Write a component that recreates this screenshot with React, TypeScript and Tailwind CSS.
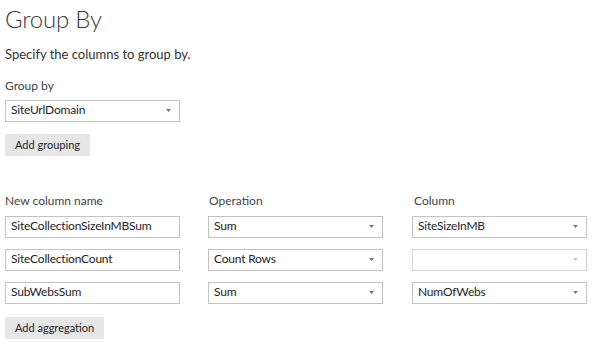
import React from "react";

const font = "font-['Lato','Noto_Sans',sans-serif]";

function Arrow({ disabled }: { disabled?: boolean }) {
  return (
    <svg width="5" height="3" viewBox="0 0 5 3" className="absolute right-[8px] top-[8px]">
      <polygon points="0,0 5,0 2.5,3" fill={disabled ? "#c6c6c6" : "#767676"} />
    </svg>
  );
}

function Select({ value, disabled }: { value?: string; disabled?: boolean }) {
  return (
    <div
      className={`relative h-[22px] w-[175px] border bg-white pl-[5px] text-[12px] leading-[18px] tracking-[-0.2px] text-[#252525] ${
        disabled ? "border-[#d2d2d2]" : "border-[#c2c2c2]"
      }`}
    >
      {value}
      <Arrow disabled={disabled} />
    </div>
  );
}

function Input({ value }: { value: string }) {
  return (
    <div className="h-[22px] w-[175px] border border-[#c2c2c2] bg-white pl-[5px] text-[12px] leading-[18px] tracking-[-0.2px] text-[#252525]">
      {value}
    </div>
  );
}

function Button({ label, w }: { label: string; w: string }) {
  return (
    <div className={`flex h-[22px] items-center bg-[#e6e6e6] pl-[10px] text-[11px] text-[#252525] ${w}`}>
      {label}
    </div>
  );
}

export default function App() {
  const rows = [
    { name: "SiteCollectionSizeInMBSum", op: "Sum", col: "SiteSizeInMB" },
    { name: "SiteCollectionCount", op: "Count Rows", col: "", disabled: true },
    { name: "SubWebsSum", op: "Sum", col: "NumOfWebs" },
  ];
  return (
    <div className={`h-[345px] w-[602px] bg-white pl-[5px] text-[#333] ${font}`}>
      <h1 className="pt-[4px] h-[34px] text-[24px] font-light leading-[30px] tracking-[-0.2px] text-[#3a3a3a]">Group By</h1>
      <p className="mt-[11px] h-[18px] text-[13px] leading-[18px] text-[#333]">Specify the columns to group by.</p>
      <div className="mt-[15px] h-[16px] text-[12px] leading-[16px] text-[#444]">Group by</div>
      <div className="mt-[6px]">
        <Select value="SiteUrlDomain" />
      </div>
      <div className="mt-[12px]">
        <Button label="Add grouping" w="w-[85px]" />
      </div>
      <div className="mt-[37px] flex h-[16px] text-[12px] leading-[16px] text-[#444]">
        <div className="w-[175px]">New column name</div>
        <div className="ml-[28px] w-[175px] pl-[1px]">Operation</div>
        <div className="ml-[29px] w-[175px] pl-[2px]">Column</div>
      </div>
      <div className="mt-[7px] flex flex-col gap-[11px]">
        {rows.map((r) => (
          <div key={r.name} className="flex">
            <Input value={r.name} />
            <div className="ml-[28px]">
              <Select value={r.op} />
            </div>
            <div className="ml-[29px]">
              <Select value={r.col} disabled={r.disabled} />
            </div>
          </div>
        ))}
      </div>
      <div className="mt-[13px]">
        <Button label="Add aggregation" w="w-[99px]" />
      </div>
    </div>
  );
}
